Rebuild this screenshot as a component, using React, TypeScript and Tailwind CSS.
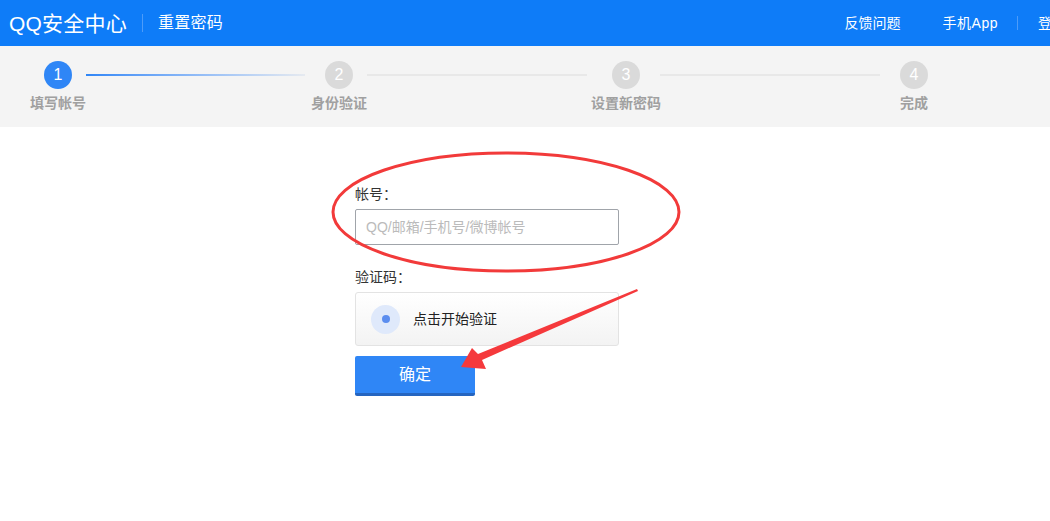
import React from "react";

const font = { fontFamily: '"Liberation Sans", "Noto Sans CJK SC", sans-serif' };
const cjk = { fontFamily: '"Noto Sans CJK SC", sans-serif' };

function Step({ n, label, active }: { n: number; label: string; active?: boolean }) {
  return (
    <div className="flex flex-col items-center w-[80px] shrink-0">
      <div
        className={`w-[28px] h-[28px] rounded-full flex items-center justify-center text-white text-[16px] ${
          active ? "bg-[#2f86f6]" : "bg-[#dadada]"
        }`}
      >
        {n}
      </div>
      <div className="mt-[6px] text-[14px] font-bold text-[#a0a0a0] leading-[16px] whitespace-nowrap">{label}</div>
    </div>
  );
}

export default function App() {
  return (
    <div className="relative w-[1050px] h-[521px] bg-white overflow-hidden" style={font}>
      {/* header */}
      <div className="h-[46px] bg-[#0e7cf8] flex items-center text-white">
        <div className="pl-[9px] text-[21px] leading-none tracking-[0.2px] whitespace-nowrap">QQ安全中心</div>
        <div className="ml-[15px] mr-[15px] w-px h-[18px] bg-[#4d9cf9]" />
        <div className="text-[16px] leading-none tracking-[0.3px] whitespace-nowrap">重置密码</div>
        <div className="flex-1" />
        <div className="text-[14px] whitespace-nowrap">反馈问题</div>
        <div className="ml-[42px] text-[14px] tracking-[0.5px] whitespace-nowrap">手机App</div>
        <div className="ml-[19px] w-px h-[14px] bg-[#4d9cf9] shrink-0" />
        <div className="ml-[20px] -mr-[16px] text-[14px] whitespace-nowrap">登录</div>
      </div>

      {/* steps */}
      <div className="h-[81px] bg-[#f4f4f4] flex items-start pt-[15px] pl-[18px]">
        <Step n={1} label="填写帐号" active />
        <div className="mt-[13px] -ml-[12px] w-[219px] shrink-0 h-[2px] bg-gradient-to-r from-[#2f86f6] to-[#e6eaf0]" />
        <div className="-ml-[6px]">
          <Step n={2} label="身份验证" />
        </div>
        <div className="mt-[13px] -ml-[12px] w-[220px] shrink-0 h-[2px] bg-[#e8e8e8]" />
        <div className="-ml-[1px]">
          <Step n={3} label="设置新密码" />
        </div>
        <div className="mt-[13px] -ml-[6px] w-[220px] shrink-0 h-[2px] bg-[#e8e8e8]" />
        <div className="-ml-[6px]">
          <Step n={4} label="完成" />
        </div>
      </div>

      {/* form */}
      <div className="pl-[355px] pt-[58px]">
        <div className="text-[14px] text-[#333] leading-[16px]" style={cjk}>帐号：</div>
        <div className="mt-[8px] w-[264px] h-[36px] border border-[#a0a4aa] rounded-[2px] flex items-center pl-[10px] text-[14px] text-[#bbbbbb]">
          QQ/邮箱/手机号/微博帐号
        </div>
        <div className="mt-[23px] text-[14px] text-[#333] leading-[16px]" style={cjk}>验证码：</div>
        <div className="mt-[8px] w-[264px] h-[54px] border border-[#e3e3e3] rounded-[3px] bg-gradient-to-b from-white to-[#f3f3f3] flex items-center pl-[15px]">
          <div className="w-[29px] h-[29px] rounded-full bg-[#dfe9fb] flex items-center justify-center">
            <div className="w-[8px] h-[8px] rounded-full bg-[#5b8def]" />
          </div>
          <div className="ml-[13px] text-[14px] text-[#222]">点击开始验证</div>
        </div>
        <div className="mt-[10px] w-[120px] h-[40px] bg-[#2f86f6] border-b-[3px] border-[#2565c0] rounded-[2px] flex items-center justify-center text-white text-[16px]">
          确定
        </div>
      </div>

      {/* annotations */}
      <svg className="absolute left-0 top-0 pointer-events-none" width="1050" height="521">
        <ellipse cx="506" cy="212" rx="173" ry="59" fill="none" stroke="#f23a3a" strokeWidth="3" />
        <polygon
          points="637,289 638,291 482,360 486,369 461,367 472,348 478,354"
          fill="#f5393c"
        />
      </svg>
    </div>
  );
}
